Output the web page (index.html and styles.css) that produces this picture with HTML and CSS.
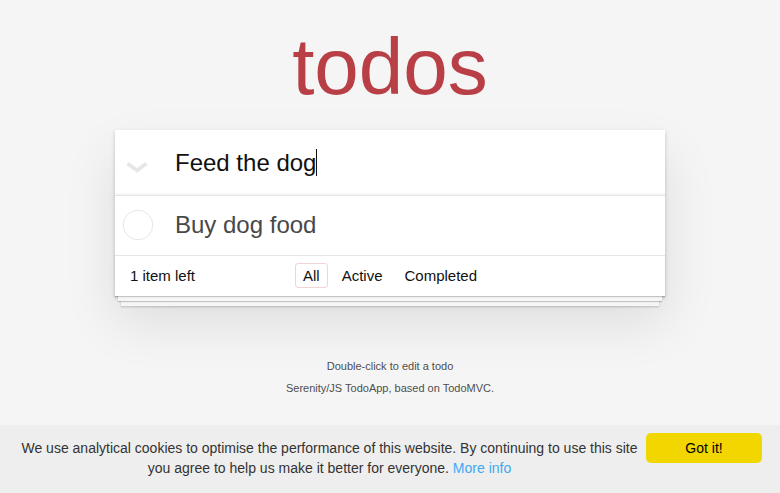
FILE: index.html
```html
<!DOCTYPE html>
<html lang="en">
<head>
<meta charset="utf-8">
<title>Serenity/JS TodoApp</title>
<link rel="stylesheet" href="styles.css">
</head>
<body>
<div class="page">
  <header class="header">
    <h1 class="title">todos</h1>
  </header>
  <section class="card">
    <div class="new-row">
      <span class="toggle-all">
        <svg width="22" height="11" viewBox="0 0 22 11"><polyline points="1.5,1.5 11,8.5 20.5,1.5" fill="none" stroke="#e6e6e6" stroke-width="3.6"/></svg>
      </span>
      <div class="new-todo">Feed the dog<span class="caret"></span></div>
    </div>
    <ul class="todo-list">
      <li class="todo">
        <span class="toggle">
          <svg width="40" height="40" viewBox="0 0 40 40"><circle cx="23" cy="20" r="14.8" fill="none" stroke="#e6e6e6" stroke-width="1"/></svg>
        </span>
        <label class="todo-label">Buy dog food</label>
      </li>
    </ul>
    <footer class="footer">
      <span class="todo-count"><strong class="count">1</strong> item left</span>
      <ul class="filters">
        <li><a class="filter selected" href="#/">All</a></li>
        <li><a class="filter" href="#/active">Active</a></li>
        <li><a class="filter" href="#/completed">Completed</a></li>
      </ul>
      <span></span>
    </footer>
  </section>
  <footer class="info">
    <p>Double-click to edit a todo</p>
    <p>Serenity/JS TodoApp, based on TodoMVC.</p>
  </footer>
</div>
<div class="cookie-banner">
  <p class="cookie-message">We use analytical cookies to optimise the performance of this website. By continuing to use this site you agree to help us make it better for everyone. <a class="cookie-link" href="#">More info</a></p>
  <a class="cookie-btn" href="#">Got it!</a>
</div>
</body>
</html>
```

FILE: styles.css
```css
html, body {
  margin: 0;
  padding: 0;
}

body {
  font: 14px "Liberation Sans", Arial, sans-serif;
  line-height: 1.4em;
  background: #f5f5f5;
  color: #111111;
  font-weight: 300;
}

.page {
  width: 550px;
  margin: 0 auto;
}

.header {
  height: 130px;
  padding-top: 27px;
  box-sizing: border-box;
}

.title {
  margin: 0;
  font-size: 80px;
  line-height: 80px;
  font-weight: 200;
  text-align: center;
  color: #b83f45;
}

.card {
  background: #fff;
  box-shadow: 0 2px 4px 0 rgba(0, 0, 0, 0.2), 0 25px 50px 0 rgba(0, 0, 0, 0.1);
}

.new-row {
  display: flex;
  align-items: center;
  height: 65px;
  box-shadow: inset 0 -2px 1px rgba(0, 0, 0, 0.03);
}

.toggle-all {
  width: 60px;
  padding-left: 11px;
  padding-top: 9px;
  box-sizing: border-box;
  display: flex;
}

.new-todo {
  font-size: 24px;
  line-height: 1.4em;
  color: #111;
}

.caret {
  display: inline-block;
  width: 1px;
  height: 27px;
  background: #111;
  vertical-align: -5px;
}

.todo-list {
  margin: 0;
  padding: 0;
  list-style: none;
  border-top: 1px solid #e6e6e6;
}

.todo {
  display: flex;
  align-items: center;
  font-size: 24px;
}

.toggle {
  width: 60px;
  display: flex;
}

.todo-label {
  padding: 15px 15px 15px 0;
  line-height: 1.2;
  color: #484848;
}

.footer {
  display: grid;
  grid-template-columns: 1fr auto 1fr;
  align-items: center;
  padding: 10px 15px;
  height: 20px;
  font-size: 15px;
  border-top: 1px solid #e6e6e6;
  box-shadow: 0 1px 1px rgba(0, 0, 0, 0.2),
              0 8px 0 -3px #f6f6f6,
              0 9px 1px -3px rgba(0, 0, 0, 0.2),
              0 16px 0 -6px #f6f6f6,
              0 17px 2px -6px rgba(0, 0, 0, 0.2);
}

.count {
  font-weight: 300;
}

.filters {
  margin: 0;
  padding: 0;
  list-style: none;
  display: flex;
}

.filter {
  color: inherit;
  margin: 3px;
  padding: 3px 7px;
  text-decoration: none;
  border: 1px solid transparent;
  border-radius: 3px;
}

.filter.selected {
  border-color: rgba(175, 47, 47, 0.2);
}

.info {
  margin: 65px auto 0;
  color: #4d4d4d;
  font-size: 11px;
  text-shadow: 0 1px 0 rgba(255, 255, 255, 0.5);
  text-align: center;
}

.info p {
  line-height: 1;
  margin: 11px 0;
}

.cookie-banner {
  position: fixed;
  left: 0;
  right: 0;
  bottom: 0;
  height: 68px;
  box-sizing: border-box;
  display: flex;
  align-items: flex-start;
  padding: 8px 18px 0;
  background: #eeeeee;
  color: #333333;
  font: 14px/20px "Liberation Sans", Arial, sans-serif;
}

.cookie-message {
  flex: 1 1 auto;
  margin: 5px 5px 0 0;
  text-align: center;
}

.cookie-link {
  color: #40a9f3;
  text-decoration: none;
}

.cookie-btn {
  flex: 0 0 auto;
  width: 116px;
  height: 30px;
  display: flex;
  align-items: center;
  justify-content: center;
  background: #f1d600;
  border-radius: 5px;
  color: #000;
  font-size: 14px;
  text-decoration: none;
}
```
